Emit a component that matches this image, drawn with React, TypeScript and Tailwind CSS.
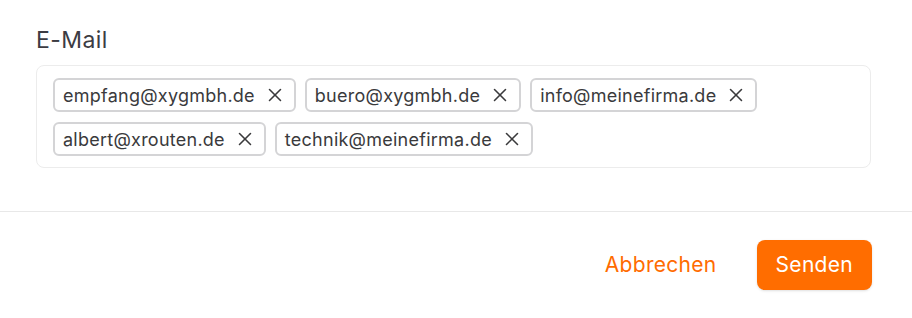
import { X } from 'lucide-react'

const emails = [
  'empfang@xygmbh.de',
  'buero@xygmbh.de',
  'info@meinefirma.de',
  'albert@xrouten.de',
  'technik@meinefirma.de',
]

export default function App() {
  return (
    <div className="w-[912px] h-[318px] bg-white font-['Inter',sans-serif] text-[#3a3a3c]">
      {/* Body */}
      <div className="pl-9 pr-[41px] pt-[24px] pb-[43px]">
        <label className="block text-[23px] leading-[32px] mb-[9px] tracking-[0.4px] text-[#3c3c43]">E-Mail</label>
        <div className="rounded-lg border border-[#ececec] pl-[16px] pr-4 pt-3 pb-[11px]">
          <div className="flex flex-wrap gap-x-[9px] gap-y-[10px]">
            {emails.map(email => (
              <span
                key={email}
                className="inline-flex items-center h-[34px] rounded-[6px] border-2 border-[#d4d4d6] pl-[8px] pr-[8px] text-[18px] tracking-[0.25px] text-[#3a3a3c]"
              >
                {email}
                <X className="ml-[9px] w-[22px] h-[22px] text-[#3a3a3c]" strokeWidth={1.7} />
              </span>
            ))}
          </div>
        </div>
      </div>

      {/* Footer */}
      <div className="border-t border-[#e8e8e8] flex items-center justify-end gap-10 px-10 pt-7">
        <button className="text-[21px] tracking-[0.3px] text-[#ff6b00]">Abbrechen</button>
        <button className="h-[50px] px-[19px] rounded-lg bg-[#ff6d00] text-white text-[21px] tracking-[0.3px] shadow-sm">
          Senden
        </button>
      </div>
    </div>
  )
}
